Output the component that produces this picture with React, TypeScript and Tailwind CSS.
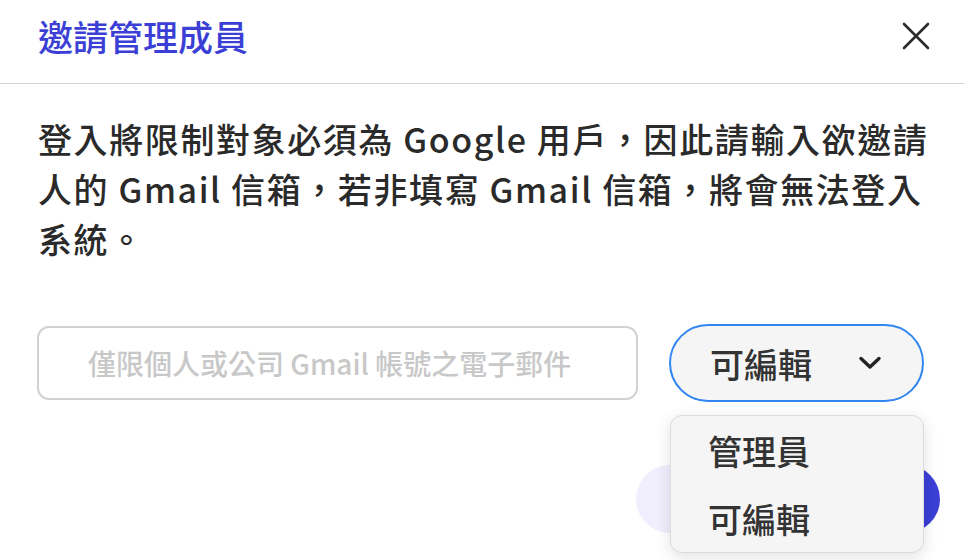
import { useState } from "react";

const font = { fontFamily: '"Noto Sans CJK TC", "Noto Sans", sans-serif' };

const roles = ["管理員", "可編輯"];

function CloseIcon() {
  return (
    <svg width="28" height="28" viewBox="0 0 28 28" fill="none">
      <path d="M2 2 L26 26 M26 2 L2 26" stroke="#2b2b2b" strokeWidth="2.6" strokeLinecap="round" />
    </svg>
  );
}

function Chevron() {
  return (
    <svg width="24" height="14" viewBox="0 0 24 14" fill="none">
      <path d="M3 2.5 L12 11 L21 2.5" stroke="#222" strokeWidth="3.4" strokeLinecap="round" strokeLinejoin="round" />
    </svg>
  );
}

export default function App() {
  const [role, setRole] = useState("可編輯");
  const [open, setOpen] = useState(true);

  return (
    <div className="w-[964px] h-[560px] bg-white overflow-hidden" style={font}>
      <header className="h-[84px] border-b border-[#d4d4d4] pl-[38px] pr-[34px] pb-[12px] flex items-center justify-between">
        <h1 className="text-[35px] leading-none font-medium text-[#3b3fd6]">邀請管理成員</h1>
        <button className="w-[28px] h-[28px] flex items-center justify-center">
          <CloseIcon />
        </button>
      </header>

      <div className="pl-[38px] pr-[26px] pt-[30px]">
        <p className="text-[34px] leading-[50px] font-medium text-[#2a2a2a] tracking-[1.6px]">
          登入將限制對象必須為 Google 用戶，因此請輸入欲邀請人的 Gmail 信箱，若非填寫 Gmail 信箱，將會無法登入系統。
        </p>

        <div className="mt-[60px] flex items-center">
          <input
            className="w-[601px] h-[74px] -ml-px rounded-[12px] border-2 border-[#d2d2d2] bg-white pl-[49px] text-left text-[28px] font-medium text-[#333] placeholder:text-[#c8c8c8] outline-none"
            placeholder="僅限個人或公司 Gmail 帳號之電子郵件"
            style={font}
          />
          <div className="relative ml-[31px]">
            <button
              onClick={() => setOpen(!open)}
              className="w-[255px] h-[78px] rounded-full border-2 border-[#3186f0] bg-[#f5f5f5] pl-[39px] pr-[40px] flex items-center justify-between"
            >
              <span className="text-[34px] font-medium text-[#333]">{role}</span>
              <Chevron />
            </button>
            {open && (
              <div className="absolute z-10 left-[1px] top-[91px] w-[254px] rounded-[12px] border border-[#dcdcdc] bg-[#f5f5f5] shadow-[0_4px_16px_rgba(0,0,0,0.12)] flex flex-col">
                {roles.map((r) => (
                  <button
                    key={r}
                    onClick={() => {
                      setRole(r);
                      setOpen(false);
                    }}
                    className="h-[68px] pl-[37px] text-left text-[34px] font-medium text-[#333]"
                  >
                    {r}
                  </button>
                ))}
              </div>
            )}
          </div>
        </div>
      </div>

      <div className="mt-[63px] flex justify-end gap-[16px] pr-[24px]">
        <button className="w-[154px] h-[68px] rounded-full bg-[#f1effd] text-[30px] font-medium text-[#3b3fd6]">取消</button>
        <button className="w-[134px] h-[68px] rounded-full bg-[#3b3fd6] text-[30px] font-medium text-white">邀請</button>
      </div>
    </div>
  );
}
